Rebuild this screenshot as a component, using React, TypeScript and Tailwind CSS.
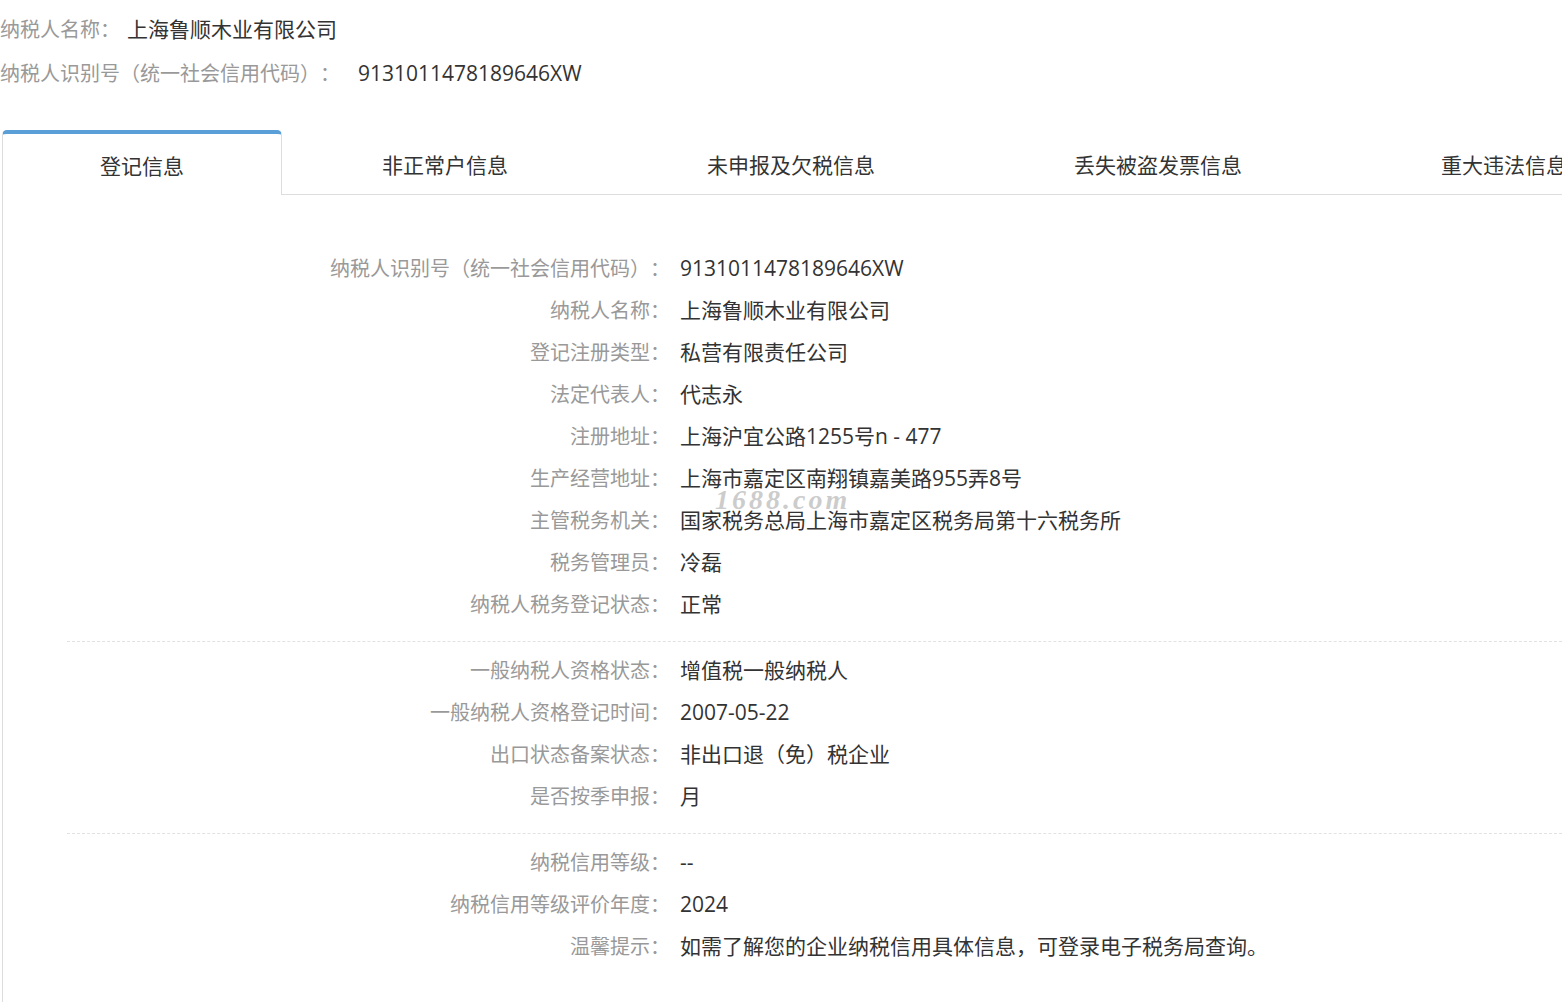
import React from "react";

const font = { fontFamily: '"Open Sans", "Noto Sans CJK SC", sans-serif' };

type Row = { label: string; value: string };

const groups: Row[][] = [
  [
    { label: "纳税人识别号（统一社会信用代码）：", value: "9131011478189646XW" },
    { label: "纳税人名称：", value: "上海鲁顺木业有限公司" },
    { label: "登记注册类型：", value: "私营有限责任公司" },
    { label: "法定代表人：", value: "代志永" },
    { label: "注册地址：", value: "上海沪宜公路1255号n - 477" },
    { label: "生产经营地址：", value: "上海市嘉定区南翔镇嘉美路955弄8号" },
    { label: "主管税务机关：", value: "国家税务总局上海市嘉定区税务局第十六税务所" },
    { label: "税务管理员：", value: "冷磊" },
    { label: "纳税人税务登记状态：", value: "正常" },
  ],
  [
    { label: "一般纳税人资格状态：", value: "增值税一般纳税人" },
    { label: "一般纳税人资格登记时间：", value: "2007-05-22" },
    { label: "出口状态备案状态：", value: "非出口退（免）税企业" },
    { label: "是否按季申报：", value: "月" },
  ],
  [
    { label: "纳税信用等级：", value: "--" },
    { label: "纳税信用等级评价年度：", value: "2024" },
    { label: "温馨提示：", value: "如需了解您的企业纳税信用具体信息，可登录电子税务局查询。" },
  ],
];

const tabs = ["非正常户信息", "未申报及欠税信息", "丢失被盗发票信息", "重大违法信息"];

export default function App() {
  return (
    <div className="min-h-[1002px] w-full overflow-hidden bg-white [text-spacing-trim:space-all]" style={font}>
      <div className="pt-[8px]">
        <div className="flex h-[44px] items-center whitespace-nowrap">
          <span className="text-[20px] text-[#999]">纳税人名称：</span>
          <span className="ml-[7px] text-[21px] text-[#333]">上海鲁顺木业有限公司</span>
        </div>
        <div className="flex h-[44px] items-center whitespace-nowrap">
          <span className="text-[20px] text-[#999]">纳税人识别号（统一社会信用代码）：</span>
          <span className="ml-[18px] text-[21px] text-[#333]">9131011478189646XW</span>
        </div>
      </div>

      <div className="mt-[34px] flex whitespace-nowrap">
        <div className="ml-[2px] flex h-[65px] w-[280px] shrink-0 items-center justify-center rounded-t-[5px] border-x border-t-4 border-x-[#ddd] border-t-[#5a9fd8] pt-[5px] text-[21px] text-[#333]">
          登记信息
        </div>
        {tabs.map((t) => (
          <div
            key={t}
            className="flex h-[65px] shrink-0 items-center border-b border-[#ddd] pl-[100px] pr-[99px] pt-[8px] text-[21px] text-[#333]"
          >
            {t}
          </div>
        ))}
        <div className="flex-1 border-b border-[#ddd]" />
      </div>

      <div className="relative ml-[2px] min-h-[807px] border-l border-[#ddd] pt-[53px]">
        <div className="ml-[64px]">
          {groups.map((g, gi) => (
            <div
              key={gi}
              className={gi < groups.length - 1 ? "mb-[8px] border-b border-dashed border-[#e2e2e2] pb-[15px]" : ""}
            >
              {g.map((r) => (
                <div key={r.label} className="flex h-[42px] items-center whitespace-nowrap">
                  <span className="w-[603px] shrink-0 text-right text-[20px] text-[#999]">{r.label}</span>
                  <span className="ml-[10px] text-[21px] text-[#333]">{r.value}</span>
                </div>
              ))}
            </div>
          ))}
        </div>
        <span
          className="pointer-events-none absolute left-[712px] top-[284px] text-[28px] font-bold italic tracking-[3px] text-[#aaa]/60"
          style={{ fontFamily: '"Liberation Serif", serif' }}
        >
          1688.com
        </span>
      </div>
    </div>
  );
}
